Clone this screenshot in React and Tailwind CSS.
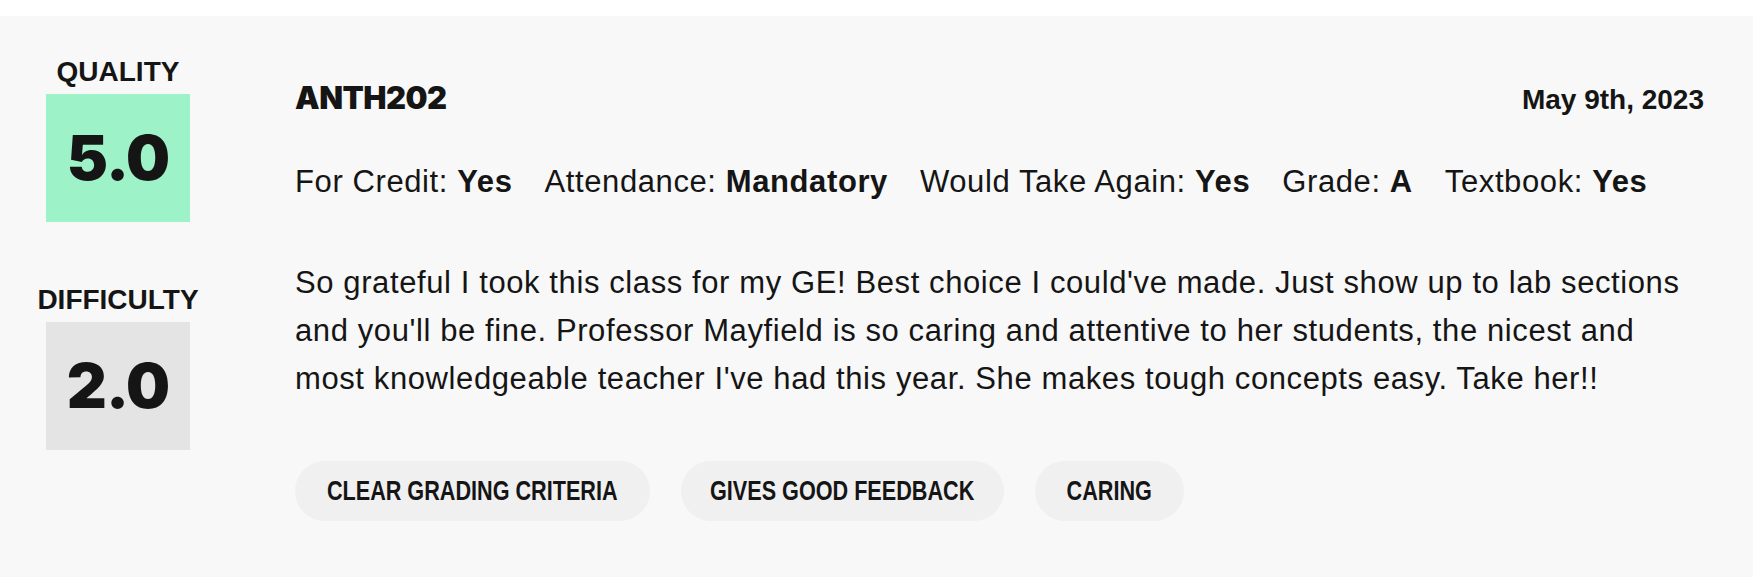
import React from "react";

const meta = [
  { label: "For Credit:", value: "Yes" },
  { label: "Attendance:", value: "Mandatory" },
  { label: "Would Take Again:", value: "Yes" },
  { label: "Grade:", value: "A" },
  { label: "Textbook:", value: "Yes" },
];

// pill widths match the condensed tag font of the original
const tags = [
  { text: "Clear grading criteria", w: "w-[355px]" },
  { text: "Gives good feedback", w: "w-[323px]" },
  { text: "Caring", w: "w-[149px]" },
];

function Score({ label, value, boxClass, className = "" }) {
  return (
    <div className={"flex flex-col items-center " + className}>
      <div className="text-[28px] leading-[34px] font-bold uppercase text-[#151515]">
        {label}
      </div>
      <div
        className={
          "mt-[5px] w-[144px] h-[128px] flex items-center justify-center " + boxClass
        }
      >
        <span className="font-['Inter',sans-serif] font-black text-[62px] leading-none tracking-[-1px] text-[#151515]">
          {value}
        </span>
      </div>
    </div>
  );
}

export default function App() {
  return (
    <div className="bg-white pt-[16px] pr-[10px] font-['Liberation_Sans',Arial,sans-serif] text-[#151515]">
      <div className="bg-[#f8f8f8] flex pb-[64px]">
        <div className="w-[236px] shrink-0 pt-[39px] flex flex-col">
          <Score label="Quality" value="5.0" boxClass="bg-[#9df3c7]" />
          <Score label="Difficulty" value="2.0" boxClass="bg-[#e4e4e4]" className="mt-[61px]" />
        </div>

        <div className="flex-1 ml-[59px] pr-[49px] pt-[64px]">
          <div className="flex justify-between items-start">
            <div className="font-['Inter',sans-serif] font-black text-[31px] leading-[36px] tracking-[-0.5px]">
              ANTH202
            </div>
            <div className="mt-[3px] text-[28px] leading-[34px] font-bold">
              May 9th, 2023
            </div>
          </div>

          <div className="mt-[47px] flex text-[31px] leading-[36px] tracking-[0.6px]">
            {meta.map((m) => (
              <div key={m.label} className="mr-[32px]">
                {m.label} <span className="font-bold">{m.value}</span>
              </div>
            ))}
          </div>

          <p className="mt-[59px] text-[31px] leading-[48px] tracking-[0.6px]">
            So grateful I took this class for my GE! Best choice I could've made. Just show up to lab sections and you'll be fine. Professor Mayfield is so caring and attentive to her students, the nicest and most knowledgeable teacher I've had this year. She makes tough concepts easy. Take her!!
          </p>

          <div className="mt-[58px] flex gap-[31px]">
            {tags.map((t) => (
              <span
                key={t.text}
                className={
                  "h-[60px] rounded-[30px] bg-[#f0f0f0] flex items-center justify-center " + t.w
                }
              >
                <span className="inline-block whitespace-nowrap scale-x-[0.772] font-bold text-[28px] leading-none uppercase">
                  {t.text}
                </span>
              </span>
            ))}
          </div>
        </div>
      </div>
    </div>
  );
}
